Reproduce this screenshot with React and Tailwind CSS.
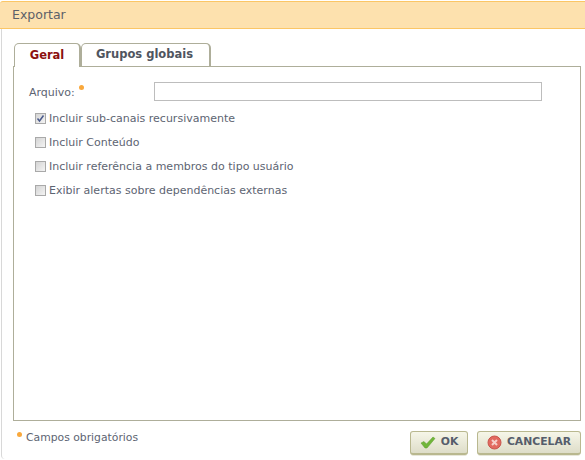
import React from 'react'

const options = [
  { label: 'Incluir sub-canais recursivamente', checked: true },
  { label: 'Incluir Conteúdo', checked: false },
  { label: 'Incluir referência a membros do tipo usuário', checked: false },
  { label: 'Exibir alertas sobre dependências externas', checked: false },
]

function Checkbox({ checked }) {
  return (
    <span className="w-[11px] h-[11px] shrink-0 -mt-[2px] border border-[#a9a9a9] bg-gradient-to-br from-[#d4d4d4] to-[#f4f4f4] flex items-center justify-center">
      {checked && (
        <svg width="9" height="9" viewBox="0 0 9 9">
          <path d="M1.5 4.5 L3.5 7 L7.5 1.5" fill="none" stroke="#4a5a8c" strokeWidth="1.5" />
        </svg>
      )}
    </span>
  )
}

function Asterisk({ className }) {
  return <span className={`w-[5px] h-[5px] rounded-full bg-[#f9a83c] ${className}`} />
}

export default function App() {
  return (
    <div className="w-[585px] h-[460px] bg-white overflow-hidden font-['DejaVu_Sans',Verdana,sans-serif] text-[11px] text-[#5d6472]">
      {/* Header */}
      <div className="mt-px h-[28px] bg-[#fde1ae] border-y border-[#fbc666] rounded-tl-[3px] flex items-center pl-3 text-[12.5px] text-[#5c6068]">
        Exportar
      </div>

      <div className="border-l border-[#d8d8d8] rounded-bl-[4px] ml-px w-[12px] h-[430px] pl-[11px]">
        {/* Tabs */}
        <div className="pt-[13px] flex h-[37px] w-[568px] pl-px items-end">
          <div className="w-[67px] h-[24px] -mb-px z-10 bg-white border border-b-0 border-r-2 border-[#aeae9a] rounded-t-[5px] flex items-center justify-center font-bold text-[11.5px] text-[#8c1010]">
            Geral
          </div>
          <div className="w-[130px] h-[23px] pr-[2px] bg-white border border-b-0 border-r-2 border-[#aeae9a] rounded-t-[5px] flex items-center justify-center font-bold text-[11.5px] text-[#4f5560]">
            Grupos globais
          </div>
        </div>

        {/* Panel */}
        <div className="w-[568px] h-[355px] border border-[#aeae9a] pt-[15px] pl-[15px]">
          <div className="flex items-center h-[19px]">
            <label className="w-[125px] pt-[4px] flex items-start">
              Arquivo:
              <Asterisk className="ml-[4px] mt-0" />
            </label>
            <input className="w-[388px] h-[19px] border border-[#bdbdbd] bg-white outline-none" />
          </div>
          <div className="mt-[6px] pl-[6px] flex flex-col">
            {options.map(opt => (
              <div key={opt.label} className="h-[24px] flex items-center gap-[3px]">
                <Checkbox checked={opt.checked} />
                <span>{opt.label}</span>
              </div>
            ))}
          </div>
        </div>

        {/* Footer */}
        <div className="w-[568px] flex justify-between items-start pt-[10px]">
          <div className="flex items-start pl-[4px]">
            <Asterisk className="mt-[1px] mr-[4px]" />
            <span className="text-[10.8px] text-[#5d6472] leading-[14px]">Campos obrigatórios</span>
          </div>
          <div className="flex gap-[9px]">
            <button className="w-[58px] h-[24px] flex items-center justify-center gap-[5px] bg-gradient-to-b from-[#f6f6e8] to-[#deddc9] border border-[#b9b88f] border-b-2 rounded-[3px] shadow-[0_2px_0_-1px_#e8e7da] font-bold text-[10.8px] text-[#565d6b]">
              <svg width="16" height="13" viewBox="0 0 16 13">
                <path d="M1 7 L4 5.5 L6.5 8 L13 1 L15 2.5 L7 12 L5 12 Z" fill="#71b63a" stroke="#5a9a2c" strokeWidth="0.5" />
              </svg>
              OK
            </button>
            <button className="w-[104px] h-[24px] flex items-center justify-center gap-[5px] bg-gradient-to-b from-[#f6f6e8] to-[#deddc9] border border-[#b9b88f] border-b-2 rounded-[3px] shadow-[0_2px_0_-1px_#e8e7da] font-bold text-[10.8px] text-[#565d6b]">
              <svg width="15" height="15" viewBox="0 0 15 15">
                <circle cx="7.5" cy="7.5" r="6.5" fill="#e2695f" stroke="#c9544b" />
                <path d="M5 5 L10 10 M10 5 L5 10" stroke="#f6cfc9" strokeWidth="2" />
              </svg>
              CANCELAR
            </button>
          </div>
        </div>
      </div>
    </div>
  )
}
